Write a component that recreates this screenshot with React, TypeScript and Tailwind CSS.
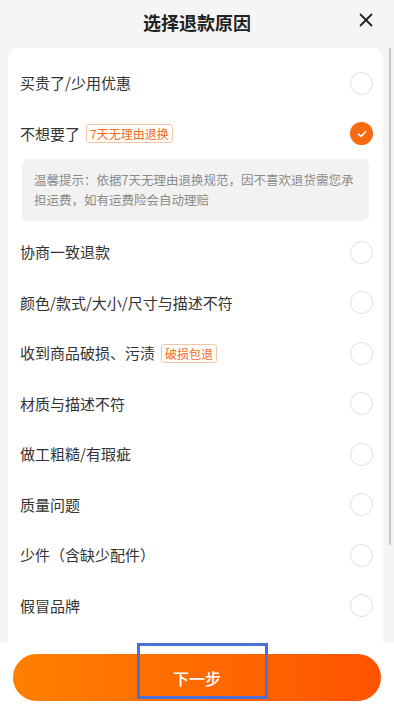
import React, { useState } from 'react';

type Reason = { label: string; tag?: string; tip?: string };

const reasons: Reason[] = [
  { label: '买贵了/少用优惠' },
  {
    label: '不想要了',
    tag: '7天无理由退换',
    tip: '温馨提示：依据7天无理由退换规范，因不喜欢退货需您承担运费，如有运费险会自动理赔',
  },
  { label: '协商一致退款' },
  { label: '颜色/款式/大小/尺寸与描述不符' },
  { label: '收到商品破损、污渍', tag: '破损包退' },
  { label: '材质与描述不符' },
  { label: '做工粗糙/有瑕疵' },
  { label: '质量问题' },
  { label: '少件（含缺少配件）' },
  { label: '假冒品牌' },
];

const Radio: React.FC<{ checked: boolean }> = ({ checked }) =>
  checked ? (
    <div className="w-[23px] h-[23px] rounded-full bg-[#f86a12] flex items-center justify-center">
      <svg width="12" height="12" viewBox="0 0 12 12" fill="none">
        <path d="M2.5 6.2 L5 8.5 L9.5 3.8" stroke="white" strokeWidth="1.6" strokeLinecap="round" strokeLinejoin="round" />
      </svg>
    </div>
  ) : (
    <div className="w-[23px] h-[23px] rounded-full border border-[#dedede]" />
  );

const App: React.FC = () => {
  const [selected, setSelected] = useState(1);

  return (
    <div
      className="relative h-[720px] w-full flex flex-col bg-[#f5f5f5] overflow-hidden"
      style={{ fontFamily: '"Noto Sans CJK SC", "Noto Sans", sans-serif' }}
    >
      {/* 标题 */}
      <div className="h-[48px] shrink-0 flex items-center justify-center relative">
        <h1 className="text-[18px] font-bold text-[#222] -mt-[4px]">选择退款原因</h1>
        <button className="absolute right-[18px] top-[10px] w-[20px] h-[20px] flex items-center justify-center">
          <svg width="14" height="14" viewBox="0 0 14 14">
            <path d="M1.5 1.5 L12.5 12.5 M12.5 1.5 L1.5 12.5" stroke="#222" strokeWidth="1.8" strokeLinecap="round" />
          </svg>
        </button>
      </div>

      {/* 原因列表 */}
      <div className="flex-1 min-h-0 ml-2 mr-[11px] bg-white rounded-t-[10px] overflow-hidden pt-[10px]">
        {reasons.map((r, i) => (
          <div key={r.label}>
            <div
              className="h-[50.5px] flex items-center justify-between pl-3 pr-[10px]"
              onClick={() => setSelected(i)}
            >
              <div className="flex items-center gap-[6px]">
                <span className="text-[15px] text-[#333]">{r.label}</span>
                {r.tag && (
                  <span className="text-[12px] leading-[17px] px-[3px] text-[#f26a1b] border border-[#f5c7a8] rounded-[3px]">
                    {r.tag}
                  </span>
                )}
              </div>
              <Radio checked={selected === i} />
            </div>
            {r.tip && selected === i && (
              <div className="mx-[14px] mb-[6px] rounded-[6px] bg-[#f2f2f2] px-[12px] py-[11px] text-[12.5px] leading-[20px] text-[#8a8a8a]">
                {r.tip}
              </div>
            )}
          </div>
        ))}
      </div>

      {/* 底部按钮 */}
      <div className="h-[77px] shrink-0 bg-white px-[13px] pt-[11px]">
        <button className="w-full h-[47px] rounded-full bg-gradient-to-r from-[#ff8000] to-[#ff5200] text-white text-[16px] font-medium">
          下一步
        </button>
      </div>

      {/* 滚动条 */}
      <div className="absolute left-[389px] top-[48px] w-[2px] h-[497px] bg-[#c4c4c4] rounded-full" />

      {/* 高亮框 */}
      <div className="absolute left-[137px] top-[643px] w-[131px] h-[56px] border-[3px] border-[#4f6fd8]" />
    </div>
  );
};

export default App;
